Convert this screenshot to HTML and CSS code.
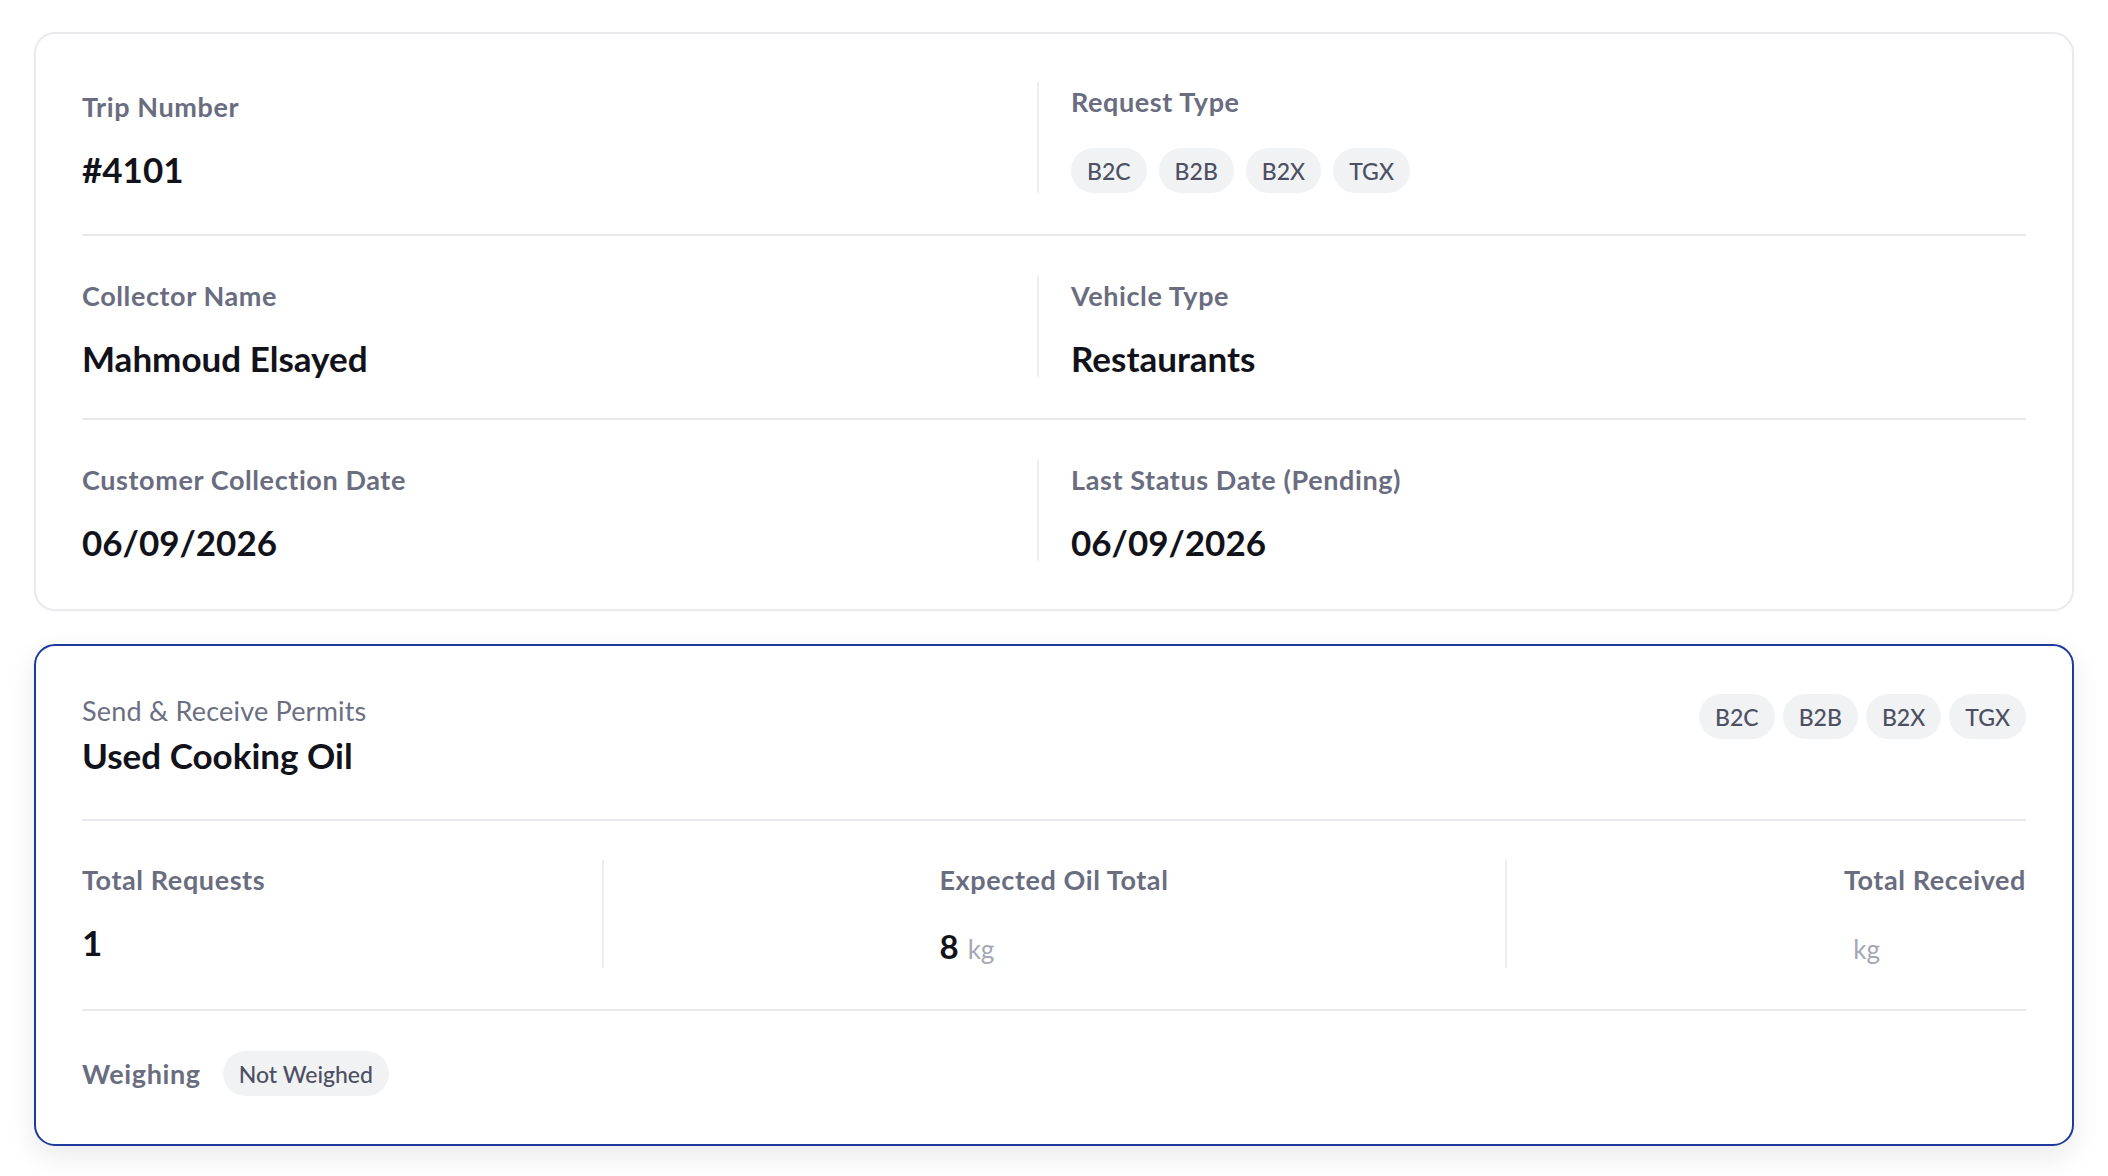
FILE: index.html
```html
<!DOCTYPE html>
<html lang="en">
<head>
<meta charset="utf-8">
<title>Trip Details</title>
<link rel="stylesheet" href="styles.css">
</head>
<body>
<main class="page">
  <section class="card info-card">
    <div class="info-row">
      <div class="field">
        <div class="label">Trip Number</div>
        <div class="value">#4101</div>
      </div>
      <div class="field divided">
        <div class="label">Request Type</div>
        <div class="chips chips-gap">
          <span class="chip">B2C</span>
          <span class="chip">B2B</span>
          <span class="chip">B2X</span>
          <span class="chip">TGX</span>
        </div>
      </div>
    </div>
    <div class="info-row">
      <div class="field">
        <div class="label">Collector Name</div>
        <div class="value">Mahmoud Elsayed</div>
      </div>
      <div class="field divided">
        <div class="label">Vehicle Type</div>
        <div class="value">Restaurants</div>
      </div>
    </div>
    <div class="info-row">
      <div class="field">
        <div class="label">Customer Collection Date</div>
        <div class="value">06/09/2026</div>
      </div>
      <div class="field divided">
        <div class="label">Last Status Date (Pending)</div>
        <div class="value">06/09/2026</div>
      </div>
    </div>
  </section>

  <section class="card permit-card">
    <header class="permit-head">
      <div class="permit-titles">
        <div class="sub">Send &amp; Receive Permits</div>
        <div class="title">Used Cooking Oil</div>
      </div>
      <div class="chips chips-tight">
        <span class="chip">B2C</span>
        <span class="chip">B2B</span>
        <span class="chip">B2X</span>
        <span class="chip">TGX</span>
      </div>
    </header>
    <div class="stats">
      <div class="stat">
        <div class="label">Total Requests</div>
        <div class="stat-value">1</div>
      </div>
      <div class="stat stat-mid">
        <div class="stat-inner">
          <div class="label">Expected Oil Total</div>
          <div class="amount"><span class="num">8</span><span class="unit">kg</span></div>
        </div>
      </div>
      <div class="stat stat-end">
        <div class="label">Total Received</div>
        <div class="amount amount-empty"><span class="num"></span><span class="unit">kg</span></div>
      </div>
    </div>
    <div class="weigh">
      <span class="label">Weighing</span>
      <span class="chip">Not Weighed</span>
    </div>
  </section>
</main>
</body>
</html>
```

FILE: styles.css
```css
* { box-sizing: border-box; }

html, body {
  margin: 0;
  background: #ffffff;
}

body {
  font-family: "Lato", "Inter", "Liberation Sans", sans-serif;
  color: #12131a;
}

.page {
  padding: 32px 34px;
  display: flex;
  flex-direction: column;
  gap: 33px;
}

.card {
  background: #ffffff;
  border-radius: 21px;
  padding: 48px 46px;
}

.info-card {
  border: 2px solid #e9eaee;
  box-shadow: 0 1px 3px rgba(20, 24, 40, 0.04);
}

.permit-card {
  border: 2px solid #1d3a9c;
  box-shadow: 0 10px 28px rgba(20, 24, 40, 0.09);
}

/* ---------- info rows ---------- */
.info-row {
  display: flex;
  align-items: center;
  padding: 40px 0 41px;
  border-bottom: 2px solid #e8e9ec;
}
.info-row:first-child { padding-top: 0; }
.info-row:last-child { padding-bottom: 0; border-bottom: 0; }

.field {
  flex: 1 1 0;
  box-sizing: content-box;
  min-width: 0;
}
.field.divided {
  border-left: 2px solid #ecedf0;
  padding-left: 32px;
}

.label {
  font-size: 27px;
  line-height: 39px;
  font-weight: 700;
  letter-spacing: 0.6px;
  color: #696d7f;
}

.value {
  margin-top: 25px;
  font-size: 35px;
  line-height: 37px;
  font-weight: 700;
  color: #12131a;
}

/* ---------- chips ---------- */
.chips {
  display: flex;
  gap: 12px;
}
.chips-gap { margin-top: 27px; }
.chips-tight { gap: 8px; }

.chip {
  display: inline-flex;
  align-items: center;
  height: 45px;
  padding: 0 16px;
  border-radius: 999px;
  background: #f1f2f4;
  color: #4c5062;
  font-size: 23px;
  font-weight: 500;
}

/* ---------- permit card ---------- */
.permit-head {
  display: flex;
  justify-content: space-between;
  align-items: flex-start;
  padding-bottom: 43px;
  border-bottom: 2px solid #e8e9ec;
}

.sub {
  font-size: 27px;
  line-height: 34px;
  font-weight: 400;
  color: #6b6f81;
  letter-spacing: 0.2px;
}

.title {
  margin-top: 7px;
  font-size: 35px;
  line-height: 41px;
  font-weight: 700;
  color: #12131a;
}

.stats {
  display: grid;
  grid-template-columns: 1fr 905px 1fr;
  padding: 39px 0 41px;
  border-bottom: 2px solid #e8e9ec;
}

.stat { min-height: 108px; }

.stat-mid {
  border-left: 2px solid #ecedf0;
  border-right: 2px solid #ecedf0;
  display: flex;
  justify-content: center;
}

.stat-end {
  text-align: right;
  display: flex;
  flex-direction: column;
  align-items: flex-end;
}

.stat-value {
  margin-top: 21px;
  font-size: 35px;
  line-height: 44px;
  font-weight: 700;
  color: #12131a;
}

.amount {
  margin-top: 27px;
  height: 42px;
  display: flex;
  align-items: baseline;
  gap: 9px;
}

.amount-empty { margin-right: 146px; }
.amount-empty .num::before { content: "\200B"; }

.num {
  font-size: 33px;
  font-weight: 700;
  color: #12131a;
}

.unit {
  font-size: 26px;
  font-weight: 400;
  color: #a4a7b4;
}

.weigh {
  display: flex;
  align-items: center;
  gap: 22px;
  padding-top: 40px;
}
```
